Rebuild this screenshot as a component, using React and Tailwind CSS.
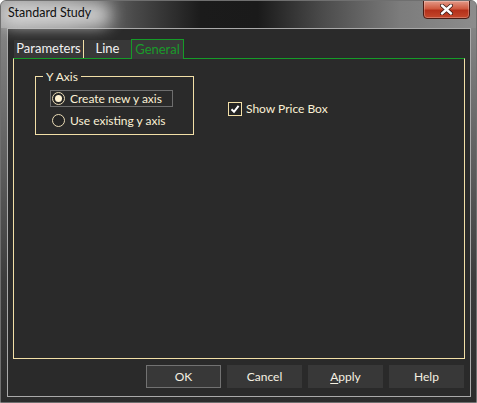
import { useState } from 'react';

const cream = 'text-[#fbf1d6]';

const Radio = ({ checked, label, focused, onClick }) => (
    <div className="flex items-center h-[17px]" onClick={onClick}>
        <div
            className={`flex items-center h-[17px] pl-[1px] pr-[10px] border ${focused ? 'border-[#6e6e6e]' : 'border-transparent'}`}
        >
            <span className="w-[13px] h-[13px] rounded-full border border-[#eadcb6] bg-[#242424] flex items-center justify-center">
                {checked && <span className="w-[7px] h-[7px] rounded-full bg-[#fff3d2]" />}
            </span>
            <span className={`ml-[5px] ${cream} leading-none`}>{label}</span>
        </div>
    </div>
);

export default function App() {
    const [axis, setAxis] = useState('new');
    const [priceBox, setPriceBox] = useState(true);

    return (
        <div className="w-[477px] h-[403px] relative overflow-hidden rounded-t-[6px] border border-[#6f6f6f] bg-[linear-gradient(180deg,#8c8c8c_0%,#6a6a6a_30%,#3c3c3c_70%,#2c2c2c_100%)] font-['Lato','Liberation_Sans',Arial,sans-serif] text-[12px]">
            {/* Title bar */}
            <div className="h-[27px] relative bg-[linear-gradient(90deg,#a2a2a2_0%,#8a8a8a_14%,#4a4a4a_28%,#1b1b1b_42%,#1a1a1a_54%,#4c4c4c_68%,#7c7c7c_84%,#8c8c8c_100%)]">
                <div className="absolute left-0 top-[2px] w-[110px] h-[24px] rounded-full bg-[#e2e2e2] blur-[8px] opacity-80" />
                <span className="absolute left-[7px] top-[6px] text-[#101010] text-[12.5px] leading-none">Standard Study</span>
                {/* Close button */}
                <div className="absolute top-[-1px] right-[6px] w-[47px] h-[19px] rounded-b-[4px] border border-[#4a1c14] bg-[linear-gradient(180deg,#e39a88_0%,#cf5a40_45%,#b4301a_55%,#c4482c_100%)] flex items-center justify-center shadow-[inset_0_0_0_1px_rgba(255,255,255,0.25)]">
                    <svg width="13" height="11" viewBox="0 0 13 11">
                        <path d="M2 1.5 L11 9.5 M11 1.5 L2 9.5" stroke="#3a1a14" strokeWidth="4" strokeLinecap="round" />
                        <path d="M2 1.5 L11 9.5 M11 1.5 L2 9.5" stroke="#ffffff" strokeWidth="2.4" strokeLinecap="round" />
                    </svg>
                </div>
            </div>

            {/* Client area */}
            <div className="ml-[6px] mr-[5px] h-[369px] border border-[#a9a9a9] bg-[#2a2a2a] flex flex-col px-[5px] pt-[10px]">
                {/* Tabs */}
                <div className="flex items-end h-[19px] pl-[1px] relative z-10">
                    <div className="h-[18px] w-[70px] bg-[#383838] flex items-center justify-center text-[#f2f2f2] text-[13px] border-r border-[#f2dfa7]">
                        Parameters
                    </div>
                    <div className="h-[18px] w-[47px] bg-[#383838] flex items-center justify-center text-[#f2f2f2] text-[13px]">
                        Line
                    </div>
                    <div className="h-[20px] w-[53px] mb-[-1px] bg-[#383838] border border-b-0 border-[#159b28] flex items-center justify-center text-[#1a9a2a] text-[13px]">
                        General
                    </div>
                </div>

                {/* Panel */}
                <div className="h-[301px] border border-[#f2dfa7] border-t-[#159b28] flex items-start">
                    <div className="ml-[21px] mt-[17px] w-[159px] h-[59px] border border-[#f2dfa7] relative flex flex-col pl-[14px] pt-[13px] gap-[5px]">
                        <span className={`absolute left-[7px] top-[-8px] px-[3px] bg-[#2a2a2a] ${cream} leading-[15px]`}>Y Axis</span>
                        <Radio checked={axis === 'new'} focused label="Create new y axis" onClick={() => setAxis('new')} />
                        <Radio checked={axis === 'existing'} label="Use existing y axis" onClick={() => setAxis('existing')} />
                    </div>

                    <div className="ml-[34px] mt-[41px] flex items-center" onClick={() => setPriceBox(!priceBox)}>
                        <span className="w-[14px] h-[14px] border border-[#f2dfa7] bg-[#242424] flex items-center justify-center">
                            {priceBox && (
                                <svg width="10" height="10" viewBox="0 0 10 10">
                                    <path d="M1.5 5.2 L4 7.8 L8.6 1.8" fill="none" stroke="#ffffff" strokeWidth="2" />
                                </svg>
                            )}
                        </span>
                        <span className={`ml-[4px] ${cream}`}>Show Price Box</span>
                    </div>
                </div>

                {/* Buttons */}
                <div className="flex justify-end gap-[6px] mt-[6px] pr-[1px]">
                    <button className="w-[75px] h-[23px] bg-[#383838] border border-[#727272] text-[#f5f0e2]">OK</button>
                    <button className="w-[75px] h-[23px] bg-[#383838] text-[#f5f0e2]">Cancel</button>
                    <button className="w-[75px] h-[23px] bg-[#383838] text-[#f5f0e2]">
                        <span className="underline underline-offset-2">A</span>pply
                    </button>
                    <button className="w-[75px] h-[23px] bg-[#383838] text-[#f5f0e2]">Help</button>
                </div>
            </div>
        </div>
    );
}
